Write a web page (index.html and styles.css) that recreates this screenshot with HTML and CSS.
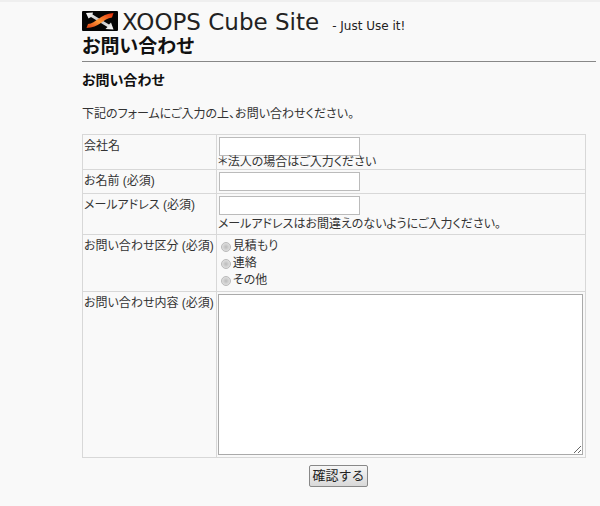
FILE: index.html
```html
<!DOCTYPE html>
<html lang="ja">
<head>
<meta charset="utf-8">
<title>お問い合わせ - XOOPS Cube Site</title>
<link rel="stylesheet" href="styles.css">
</head>
<body>
<main class="page">
  <header class="site">
    <svg class="logo" viewBox="0 0 36 20" aria-hidden="true">
      <defs>
        <linearGradient id="flame" x1="0" y1="1" x2="1" y2="0">
          <stop offset="0" stop-color="#d83a10"/>
          <stop offset=".45" stop-color="#ff9a38"/>
          <stop offset="1" stop-color="#e02808"/>
        </linearGradient>
        <linearGradient id="steel" x1="0" y1="0" x2="1" y2="1">
          <stop offset="0" stop-color="#fff"/>
          <stop offset=".5" stop-color="#bbb"/>
          <stop offset="1" stop-color="#fff"/>
        </linearGradient>
      </defs>
      <rect width="36" height="20" rx="1" fill="#050505"/>
      <path d="M4 2 L11 1.5 L10.500 3.500 L27 13.500 L29 11.500 L31.500 18.500 L23.500 18 L25.500 16 L9 6 L6.500 7.500Z" fill="url(#steel)"/>
      <path d="M4.500 17 L6 13 C14 12.500 18 3 31.500 2 L30 6.500 C21 7.500 17 17 4.500 17Z" fill="url(#flame)"/>
    </svg>
    <span class="site-name">XOOPS Cube Site</span>
    <span class="slogan">- Just Use it!</span>
  </header>
  <h1 class="title">お問い合わせ</h1>
  <h2 class="subtitle">お問い合わせ</h2>
  <p class="intro">下記のフォームにご入力の上、お問い合わせください。</p>
  <form class="contact">
    <table class="fields">
      <tr>
        <th scope="row"><label for="company">会社名</label></th>
        <td><input class="text" type="text" id="company"><div class="note">＊法人の場合はご入力ください</div></td>
      </tr>
      <tr>
        <th scope="row"><label for="name">お名前 (必須)</label></th>
        <td><input class="text" type="text" id="name"></td>
      </tr>
      <tr>
        <th scope="row"><label for="mail">メールアドレス (必須)</label></th>
        <td><input class="text" type="text" id="mail"><div class="note note-mail">メールアドレスはお間違えのないようにご入力ください。</div></td>
      </tr>
      <tr>
        <th scope="row">お問い合わせ区分 (必須)</th>
        <td class="choices">
          <label class="choice"><input type="radio" name="kind">見積もり</label>
          <label class="choice"><input type="radio" name="kind">連絡</label>
          <label class="choice"><input type="radio" name="kind">その他</label>
        </td>
      </tr>
      <tr>
        <th scope="row"><label for="body">お問い合わせ内容 (必須)</label></th>
        <td><textarea class="body" id="body"></textarea></td>
      </tr>
    </table>
    <div class="actions"><button class="submit" type="submit">確認する</button></div>
  </form>
</main>
</body>
</html>
```
FILE: styles.css
```css
* {
  box-sizing: border-box;
}

body {
  margin: 0;
  border-top: 2px solid #efefef;
  background: #f9f9f9;
  color: #333;
  font-family: "Liberation Sans", "Noto Sans CJK JP", sans-serif;
  font-size: 12px;
  line-height: 16px;
  font-feature-settings: "palt";
}

.page {
  padding: 8px 4px 16px 82px;
}

.site {
  display: flex;
  align-items: baseline;
  height: 24px;
  color: #222;
  font-family: "DejaVu Sans", sans-serif;
  line-height: 24px;
  white-space: nowrap;
}

.logo {
  align-self: flex-start;
  width: 36px;
  height: 20px;
  margin: 1px 4px 0 0;
}

.site-name {
  font-size: 23px;
}

.slogan {
  margin-left: 13px;
  font-size: 12px;
}

.title {
  margin: 0;
  padding-top: 1px;
  padding-bottom: 2px;
  border-bottom: 1px solid #888;
  color: #111;
  font-size: 19px;
  line-height: 24px;
}

.subtitle {
  margin: 8px 0 0;
  color: #111;
  font-size: 14px;
  line-height: 20px;
}

.intro {
  margin: 16px 0 12px;
}

.contact {
  margin-right: 10px;
}

.fields {
  width: 100%;
  border-collapse: collapse;
}

.fields th,
.fields td {
  padding: 2px 2px 2px 1px;
  border: 1px solid #d8d8d8;
  text-align: left;
  vertical-align: top;
}

.fields th {
  width: 133px;
  font-weight: normal;
  line-height: 18px;
  white-space: nowrap;
}

.text {
  display: block;
  width: 141px;
  height: 19px;
  margin-left: 1px;
  border: 1px solid #bbb;
  background: #fff;
}

.note {
  margin-bottom: -2px;
  line-height: 13px;
}

.note-mail {
  line-height: 19px;
}

.fields .choices {
  padding-bottom: 3px;
}

.choice {
  display: flex;
  align-items: center;
  height: 17px;
}

.choice input {
  appearance: none;
  width: 10px;
  height: 10px;
  margin: 2px 2px 0 3px;
  border: 1px solid #bbb;
  border-radius: 50%;
  background: radial-gradient(#bbb, #eee);
}

.choice input:checked {
  background: #666;
}

.body {
  display: block;
  width: 100%;
  height: 161px;
  border: 1px solid #aaa;
  background: #fff;
  font: inherit;
}

.actions {
  padding-top: 7px;
  padding-left: 9px;
  text-align: center;
}

.submit {
  height: 22px;
  padding: 0 2px;
  border: 1px solid #888;
  border-radius: 2px;
  background: linear-gradient(#f6f6f6, #d8d8d8);
  color: #222;
  font-family: inherit;
  font-size: 13px;
  line-height: 20px;
}
```
